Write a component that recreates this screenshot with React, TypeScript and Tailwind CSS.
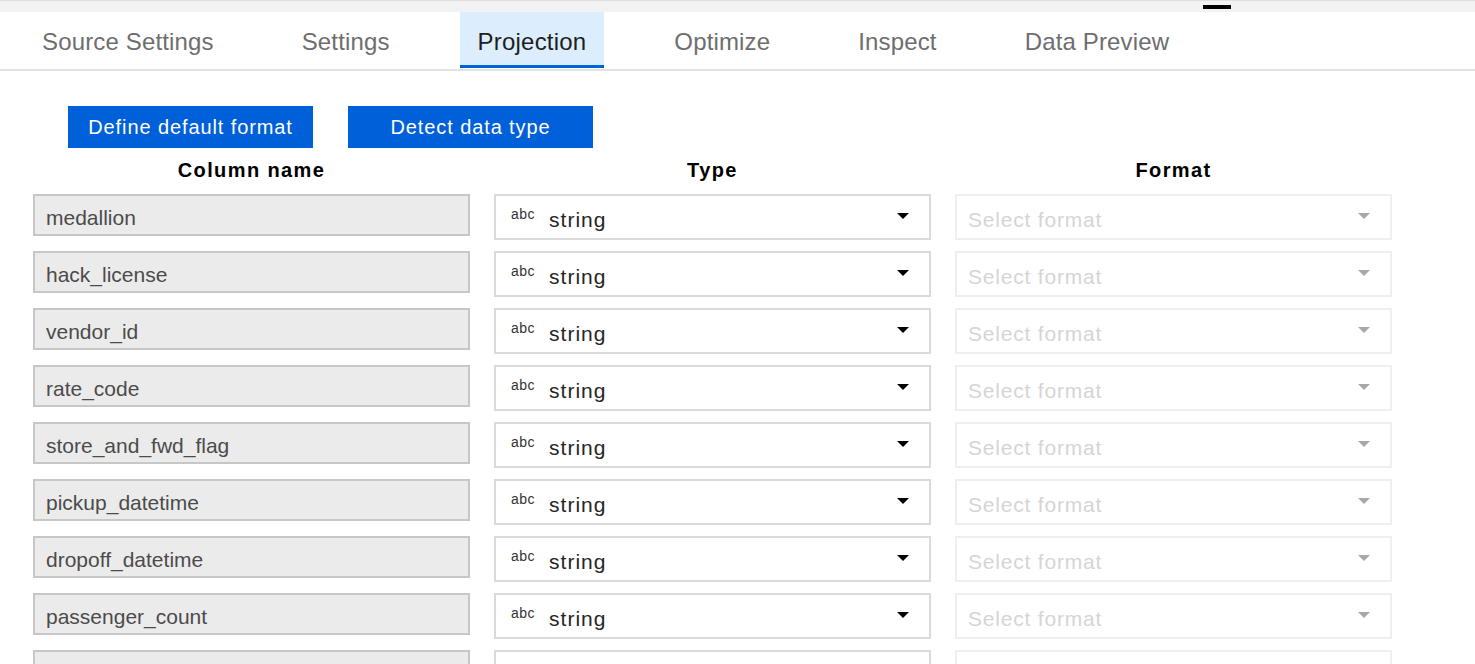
import React from "react";

const TABS = [
  "Source Settings",
  "Settings",
  "Projection",
  "Optimize",
  "Inspect",
  "Data Preview",
];

const COLUMNS = [
  "medallion",
  "hack_license",
  "vendor_id",
  "rate_code",
  "store_and_fwd_flag",
  "pickup_datetime",
  "dropoff_datetime",
  "passenger_count",
  "trip_time_in_secs",
];

function Caret({ color }: { color: string }) {
  return (
    <svg width="12" height="6" viewBox="0 0 12 6" className="shrink-0">
      <polygon points="0,0 12,0 6,6" fill={color} />
    </svg>
  );
}

function Row({ name }: { name: string }) {
  return (
    <div className="grid grid-cols-[437px_437px_437px] items-start gap-x-[24px]">
      {/* Column name (read only) */}
      <div className="flex h-[42px] items-center border-2 border-[#c7c7c7] bg-[#ebebeb] pl-[11px] pt-[5px] text-[21px] text-[#4b4b4b]">
        {name}
      </div>

      {/* Type dropdown */}
      <div className="flex h-[46px] items-center border-2 border-[#dadada] bg-white pl-[15px] pr-[20px] pt-[5px]">
        <span className="mb-[12px] text-[14px] leading-[14px] tracking-[0.5px] text-[#333]">
          abc
        </span>
        <span className="ml-[14px] text-[21px] leading-[24px] tracking-[1px] text-[#262626]">
          string
        </span>
        <span className="ml-auto mb-[7px]">
          <Caret color="#000" />
        </span>
      </div>

      {/* Format dropdown (disabled) */}
      <div className="flex h-[46px] items-center border-2 border-[#efefef] bg-white pl-[11px] pr-[20px] pt-[5px]">
        <span className="text-[21px] leading-[24px] tracking-[0.8px] text-[#d5d5d5]">
          Select format
        </span>
        <span className="ml-auto mb-[7px]">
          <Caret color="#a8a8a8" />
        </span>
      </div>
    </div>
  );
}

export default function App() {
  return (
    <div
      className="h-[664px] w-full overflow-hidden bg-white"
      style={{ fontFamily: '"Liberation Sans", Arial, sans-serif' }}
    >
      {/* Top strip */}
      <div className="h-[12px] border-t border-[#dedede] bg-[#f2f2f2] pt-[4px]">
        <div className="ml-[1203px] h-[4px] w-[28px] bg-black" />
      </div>

      {/* Tabs */}
      <div className="flex gap-x-[52px] border-b-2 border-[#e3e3e3] pb-[1px] pl-[24px]">
        {TABS.map((t) => {
          const active = t === "Projection";
          return (
            <div
              key={t}
              className={
                active
                  ? "flex h-[56px] items-center border-b-[3px] border-[#0062db] bg-[#dcedfd] px-[18px] pt-[7px] text-[24px] tracking-[0.2px] text-[#1e1e1e]"
                  : "flex h-[56px] items-center border-b-[3px] border-transparent px-[18px] pt-[7px] text-[24px] tracking-[0.15px] text-[#6e6e6e]"
              }
            >
              {t}
            </div>
          );
        })}
      </div>

      {/* Actions */}
      <div className="mt-[35px] flex gap-x-[35px] pl-[68px]">
        <button className="flex h-[42px] w-[245px] items-center justify-center bg-[#0060da] text-[20px] tracking-[0.9px] text-white">
          Define default format
        </button>
        <button className="flex h-[42px] w-[245px] items-center justify-center bg-[#0060da] text-[20px] tracking-[0.9px] text-white">
          Detect data type
        </button>
      </div>

      {/* Projection grid */}
      <div className="pl-[33px]">
        <div className="mt-[10px] grid h-[24px] grid-cols-[437px_437px_437px] gap-x-[24px] text-center text-[20px] font-bold leading-[24px] tracking-[1.4px] text-black">
          <div>Column name</div>
          <div>Type</div>
          <div>Format</div>
        </div>
        <div className="mt-[12px] flex flex-col gap-y-[11px]">
          {COLUMNS.map((c) => (
            <Row key={c} name={c} />
          ))}
        </div>
      </div>
    </div>
  );
}
